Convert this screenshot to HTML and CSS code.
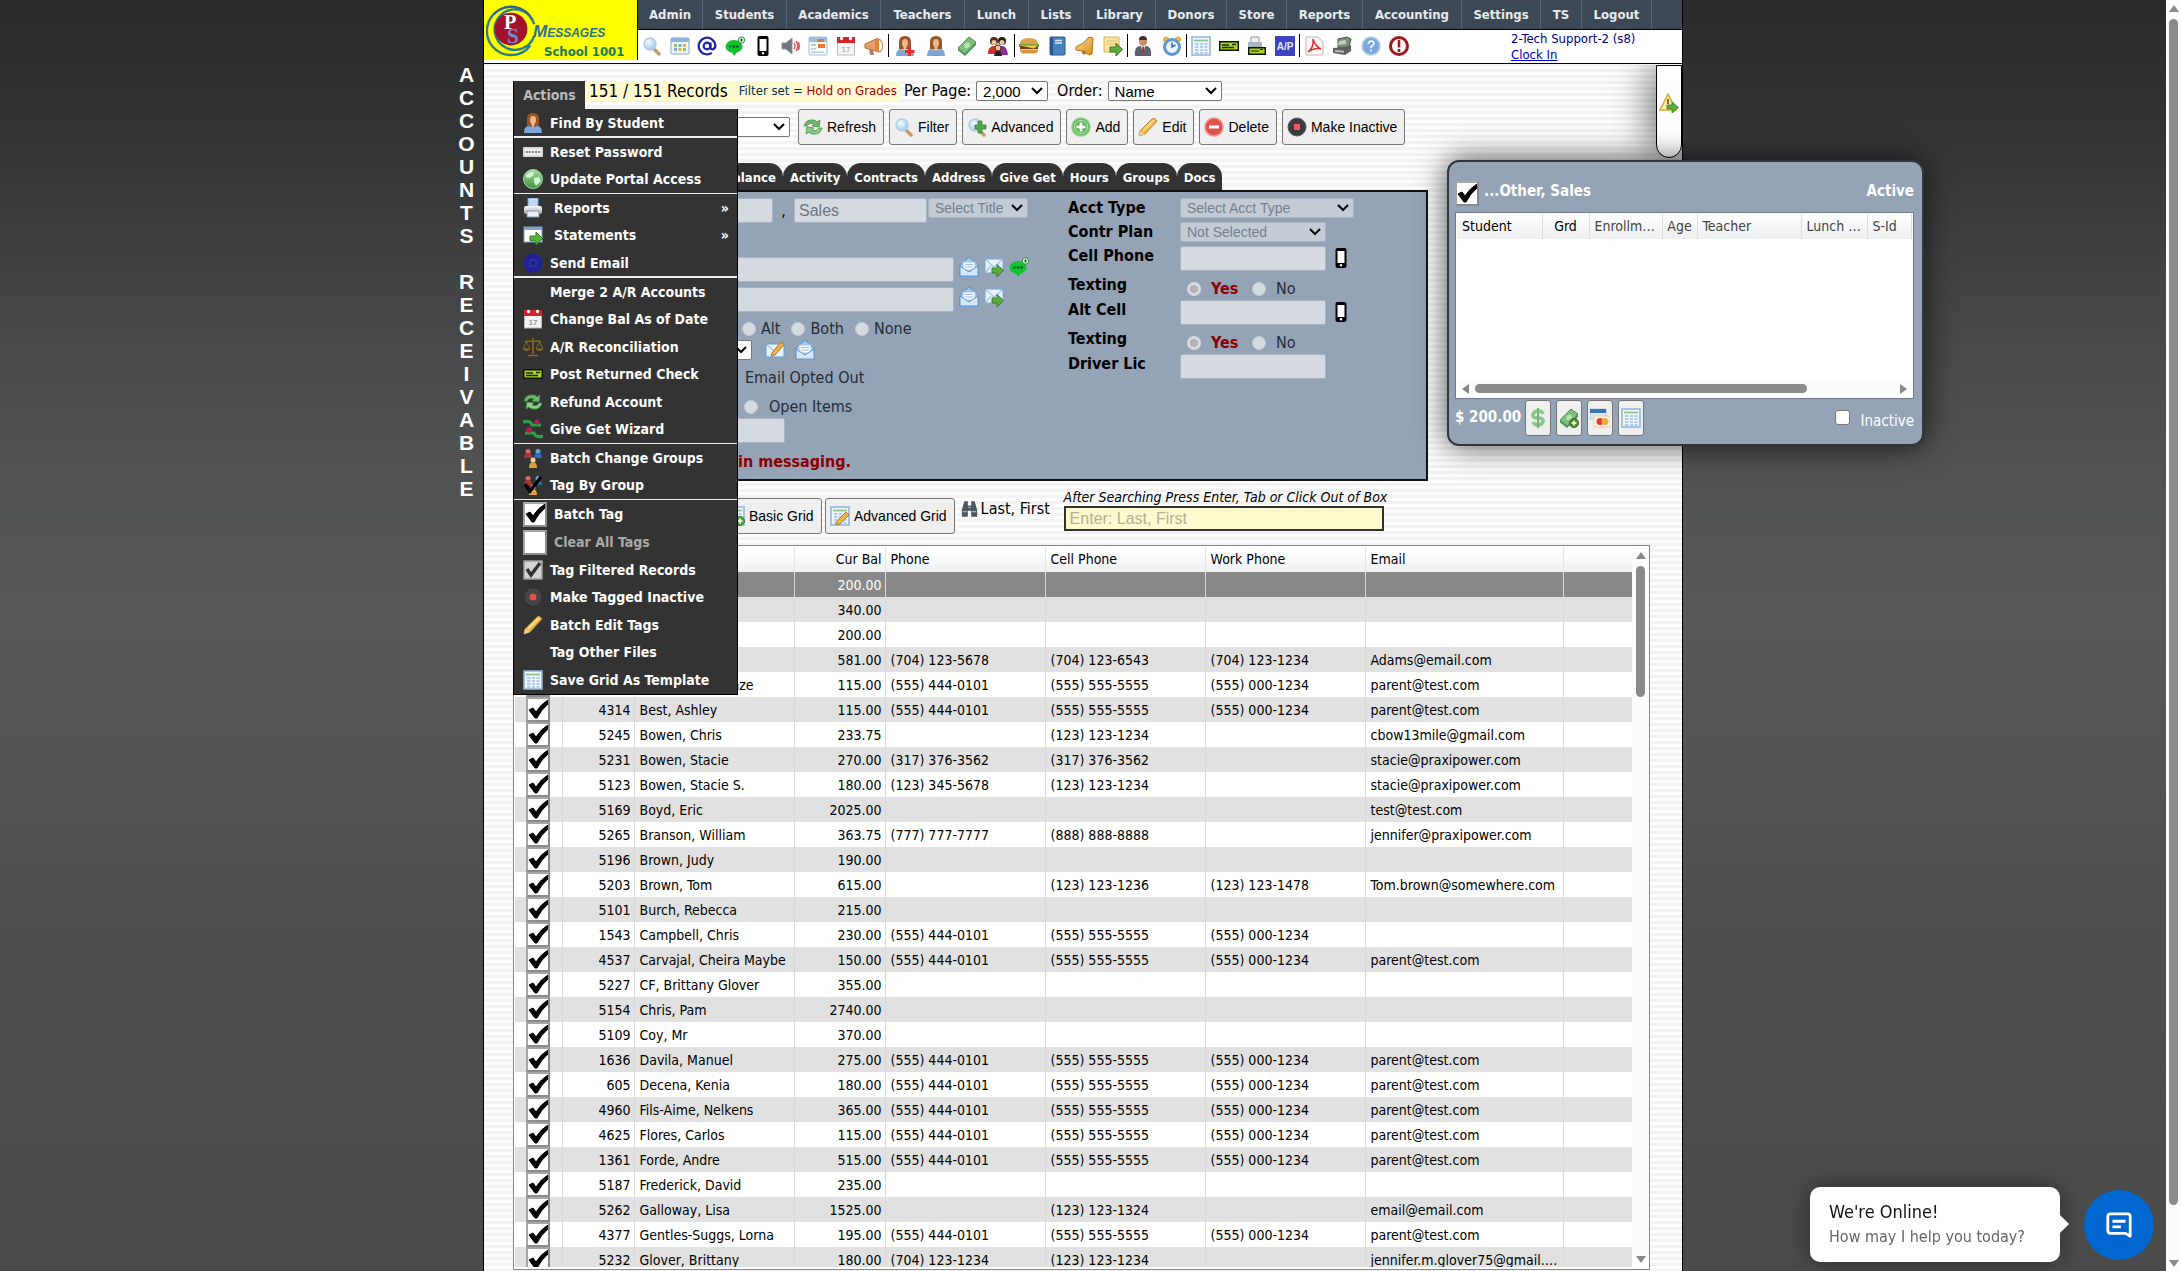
FILE: index.html
```html
<!DOCTYPE html>
<html lang="en">
<head>
<meta charset="utf-8">
<title>Accounts Receivable</title>
<link rel="stylesheet" href="styles.css">
</head>
<body>
<svg class="sprite" aria-hidden="true">
  <defs>
    <linearGradient id="g-blue" x1="0" y1="0" x2="0" y2="1"><stop offset="0" stop-color="#f2f8ff"/><stop offset="1" stop-color="#8db9e6"/></linearGradient>
    <linearGradient id="g-green" x1="0" y1="0" x2="0" y2="1"><stop offset="0" stop-color="#a5dca0"/><stop offset="1" stop-color="#3f9440"/></linearGradient>
    <linearGradient id="g-gold" x1="0" y1="0" x2="1" y2="1"><stop offset="0" stop-color="#ffe08a"/><stop offset="1" stop-color="#d18a1c"/></linearGradient>
    <linearGradient id="g-gray" x1="0" y1="0" x2="0" y2="1"><stop offset="0" stop-color="#fafafa"/><stop offset="1" stop-color="#a8a8a8"/></linearGradient>
    <radialGradient id="g-glass" cx=".4" cy=".35" r=".7"><stop offset="0" stop-color="#f4faff"/><stop offset="1" stop-color="#9cc4ea"/></radialGradient>
  </defs>
  <symbol id="search" viewBox="0 0 20 20"><path d="M11 12l6 6" stroke="#c99a6b" stroke-width="3.4" stroke-linecap="round"/><circle cx="8" cy="8" r="6" fill="url(#g-glass)" stroke="#b4cde6" stroke-width="1.4"/></symbol>
  <symbol id="search-plus" viewBox="0 0 20 20"><use href="#search"/><path d="M11 4h4v4h4v4h-4v4h-4v-4H8V8h3z" fill="#4da64d" stroke="#2f7a33" stroke-width=".7"/></symbol>
  <symbol id="cal-grid" viewBox="0 0 20 20"><rect x="1" y="2" width="18" height="16" rx="1" fill="#eef5fc" stroke="#7fa8d2"/><path d="M1 2h18v4H1z" fill="#8cb4de"/><path d="M4 8h3v3H4zM13 12h3v3h-3z" fill="#8cc06a"/><path d="M8.500 8h3v3h-3zM4 12h3v3H4z" fill="#7da9dc"/><path d="M13 8h3v3h-3zM8.500 12h3v3h-3z" fill="#e8b04c"/></symbol>
  <symbol id="at" viewBox="0 0 20 20"><circle cx="10" cy="10" r="3.300" fill="none" stroke="#1a1fb4" stroke-width="2.200"/><path d="M13.500 6.500v5.500c0 2 4.800 2 4.800-2.500a8.300 8.300 0 1 0-3.500 7.300" fill="none" stroke="#1a1fb4" stroke-width="2.200"/></symbol>
  <symbol id="at-disc" viewBox="0 0 20 20"><circle cx="10" cy="10" r="9.500" fill="#20209c"/><circle cx="10" cy="10" r="3.500" fill="none" stroke="#333a8a" stroke-width="1.500"/></symbol>
  <symbol id="chat" viewBox="0 0 20 20"><ellipse cx="9" cy="10.500" rx="8.500" ry="6.500" fill="#12c22c"/><path d="M7 16l2 4 3-4z" fill="#12c22c"/><circle cx="5.500" cy="10.500" r="1.300" fill="#073"/><circle cx="9" cy="10.500" r="1.300" fill="#053"/><circle cx="12.500" cy="10.500" r="1.300" fill="#053"/><circle cx="16.500" cy="4" r="3.200" fill="#e9fbe9" stroke="#1a6b24" stroke-width=".8"/><path d="M16.500 2.300v3.400M14.800 4h3.400" stroke="#1a6b24" stroke-width="1.100"/></symbol>
  <symbol id="phone" viewBox="0 0 20 20"><rect x="4.500" y="0" width="11" height="20" rx="2" fill="#000"/><rect x="6.500" y="3" width="7" height="12" fill="#fff"/><circle cx="10" cy="17.300" r="1.200" fill="#fff"/></symbol>
  <symbol id="speaker" viewBox="0 0 20 20"><path d="M1 7h4l6-5v16l-6-5H1z" fill="#6d7680" stroke="#8b939b"/><path d="M13 7q2 3 0 6M15 5q3.500 5 0 10M17.300 6q2 4 0 8" fill="none" stroke="#e05555" stroke-width="1.500"/></symbol>
  <symbol id="cal-orange" viewBox="0 0 20 20"><rect x="1" y="1" width="18" height="18" rx="1" fill="#f6f9fc" stroke="#a4bed8"/><path d="M1 1h18v5H1z" fill="#9dbfe4"/><path d="M9 3h7v3H9zM10 8h7v4h-7z" fill="#e9772e"/><path d="M3 8h5v2H3zM3 12h5v1.500H3zM3 15.500h13V17H3z" fill="#bcc9d8"/></symbol>
  <symbol id="cal-date" viewBox="0 0 20 20"><rect x="1.500" y="2" width="17" height="17" fill="#f4f4f4" stroke="#b9b9b9"/><path d="M1 1h18v6H1z" fill="#d1242b"/><circle cx="5.500" cy="2.500" r="1.700" fill="#fff"/><circle cx="14.500" cy="2.500" r="1.700" fill="#fff"/><text x="10" y="16" font-size="8" text-anchor="middle" fill="#999" font-family="Liberation Sans">17</text></symbol>
  <symbol id="horn" viewBox="0 0 20 20"><path d="M1 8l11-5v12L1 12z" fill="#e2a06c" stroke="#b3703c"/><path d="M12 2q7 0 7 8t-7 6z" fill="#e8803c"/><path d="M15 4q3 1 3 6t-3 5z" fill="#fff"/><path d="M5 13h4l1 6H6z" fill="#a88668"/></symbol>
  <symbol id="person" viewBox="0 0 20 20"><path d="M4 13V6q0-6 6-6t6 6v7z" fill="#9a5424"/><ellipse cx="10" cy="7" rx="3" ry="4" fill="#e9b88b"/><path d="M1 20q0-7 5-7l4 1 4-1q5 0 5 7z" fill="#7fa5d8"/><path d="M8 10h4l-2 6z" fill="#e9b88b"/></symbol>
  <symbol id="person-add" viewBox="0 0 20 20"><use href="#person"/><path d="M13 10.500h3V14h3.500v3H16v3h-3v-3h-3v-3h3z" fill="#e03131"/></symbol>
  <symbol id="money" viewBox="0 0 20 20"><path d="M1 12L12 1l7 5L8 18z" fill="#7cbf80" stroke="#4d9556"/><path d="M1 12v2.500L8 20l11-11V6L8 18z" fill="#4d9556"/><ellipse cx="10" cy="9.500" rx="3" ry="2.500" fill="#b7e0b5" transform="rotate(-40 10 9.500)"/></symbol>
  <symbol id="money-add" viewBox="0 0 20 20"><use href="#money"/><circle cx="15" cy="15" r="4.500" fill="#4f8c2c" stroke="#33651a"/><path d="M15 12.500v5M12.500 15h5" stroke="#fff" stroke-width="1.500"/></symbol>
  <symbol id="people" viewBox="0 0 20 20"><circle cx="6" cy="5" r="4" fill="#4a2a1a"/><circle cx="14" cy="5" r="4" fill="#1d1d1d"/><circle cx="6" cy="6.500" r="2.500" fill="#f0c49a"/><circle cx="14" cy="6.500" r="2.500" fill="#f0c49a"/><path d="M0 18q0-8 6-8t5 8z" fill="#c33"/><path d="M9 19q0-9 5-9t6 9z" fill="#8a2f96"/><circle cx="10" cy="12" r="3" fill="#f0c49a" stroke="#4a2a1a"/><path d="M6 20q1-5 4-5t4 5z" fill="#222"/></symbol>
  <symbol id="burger" viewBox="0 0 20 20"><path d="M1 8q0-6 9-6t9 6z" fill="#e0a04c"/><path d="M0 8h20v3H0z" fill="#6fa03c"/><path d="M1 10h18v3H1z" fill="#74401e"/><path d="M1 9.500h18l-4 3z" fill="#f2c843"/><path d="M1 13.500h18q0 4-4 4H5q-4 0-4-4z" fill="#d8953f"/></symbol>
  <symbol id="book" viewBox="0 0 20 20"><rect x="3" y="1" width="15" height="18" rx="1" fill="#4d83bd" stroke="#28588e"/><path d="M3 1h3v18H3z" fill="#28588e"/><path d="M8 4.500h7M8 7h7" stroke="#dce9f7" stroke-width="1.300"/></symbol>
  <symbol id="bell" viewBox="0 0 20 20"><path d="M1 11Q9 8 14 1l4 1-1 16-3 1Q8 14 1 14z" fill="url(#g-gold)" stroke="#b0741a"/><circle cx="9" cy="16.500" r="2" fill="#b0741a"/></symbol>
  <symbol id="note-out" viewBox="0 0 20 20"><path d="M1 1h15v12l-3 3H1z" fill="#fbe3a2" stroke="#dcae55"/><path d="M3.500 5h10M3.500 8h8" stroke="#e3b968"/><path d="M7 11h6V7l6.500 6.500L13 20v-4H7z" fill="#5cae3c" stroke="#34802a"/></symbol>
  <symbol id="suit" viewBox="0 0 20 20"><path d="M2 20q-1-10 5-10h6q6 0 5 10z" fill="#5b616c"/><circle cx="10" cy="5.500" r="4.200" fill="#c98f66"/><path d="M6 4q0-4 4-4t4 4z" fill="#3d3029"/><path d="M8 10h4l-2 8z" fill="#fff"/><path d="M9.300 10.500h1.600L11 16l-1 2-1-2z" fill="#b61f2b"/></symbol>
  <symbol id="clock" viewBox="0 0 20 20"><circle cx="4" cy="3.500" r="3" fill="#e7b63f"/><circle cx="16" cy="3.500" r="3" fill="#e7b63f"/><circle cx="10" cy="11" r="7.500" fill="#eaf4ff" stroke="#5c97d0" stroke-width="3"/><path d="M10 6.500V11l3.500-2" stroke="#356ea8" stroke-width="1.500" fill="none"/></symbol>
  <symbol id="sheet" viewBox="0 0 20 20"><rect x="1" y="1" width="18" height="18" fill="#eef6fd" stroke="#8fb4dc" stroke-width="1.500"/><path d="M3 4.500h14" stroke="#8ac08a" stroke-width="1.600"/><path d="M4 8h3.500M9 8h3M13.500 8h3M4 11h3.500M9 11h3M13.500 11h3M4 14h3.500M9 14h3M13.500 14h3M4 17h3.500M9 17h3M13.500 17h3" stroke="#b4cdea" stroke-width="1.800"/></symbol>
  <symbol id="sheet-edit" viewBox="0 0 20 20"><use href="#sheet"/><path d="M7 15L16 6l3 3-9 9-4 1z" fill="#f2b544" stroke="#b5802a"/></symbol>
  <symbol id="sheet-add" viewBox="0 0 20 20"><use href="#sheet"/><circle cx="15" cy="15" r="4.500" fill="#59a845" stroke="#2f7d25"/><path d="M15 12.500v5M12.500 15h5" stroke="#fff" stroke-width="1.600"/></symbol>
  <symbol id="check-slip" viewBox="0 0 20 20"><path d="M0 5h20v10H0z" fill="#111"/><path d="M1.500 6.500h17v7h-17z" fill="#a9d61c"/><path d="M3 9h7M3 11.500h12M13 8.500h4" stroke="#1c2a00" stroke-width="1.300"/></symbol>
  <symbol id="print-slip" viewBox="0 0 20 20"><path d="M4 1h8v7H4z" fill="#eef4fa" stroke="#8a98a8"/><path d="M1 6h14v6H1z" fill="#a9b4c2"/><path d="M1 11h18v8H1z" fill="#111"/><path d="M2.500 12.500h15v5h-15z" fill="#a9d61c"/><path d="M4 15h8M13 13.500h3" stroke="#1c2a00" stroke-width="1.200"/></symbol>
  <symbol id="ap" viewBox="0 0 20 20"><path d="M0 0h20v20H0z" fill="#3d45c4"/><text x="10" y="14" font-size="10" font-weight="bold" text-anchor="middle" fill="#e4e6ff" font-family="Liberation Sans">A/P</text></symbol>
  <symbol id="pdf" viewBox="0 0 20 20"><path d="M2 1h12l5 5v13H2z" fill="#fbf6f6" stroke="#c9b5b5"/><path d="M9 3q2 7 8 10-6-2-13 3 6-4 5-13" fill="none" stroke="#d8332e" stroke-width="1.500"/></symbol>
  <symbol id="register" viewBox="0 0 20 20"><path d="M6 3l9-2 4 2-2 8-11 1z" fill="#7d8a7d" stroke="#4d574d"/><path d="M7 5l7-1v4l-8 1z" fill="#b9d6b2"/><path d="M1 12l13-1 5-2v6l-6 4-12-2z" fill="#59635a"/><path d="M3 14l9 .8v2L3 16z" fill="#b7c2b6"/></symbol>
  <symbol id="help" viewBox="0 0 20 20"><circle cx="10" cy="10" r="9" fill="#7ba9df" stroke="#b9cfe8" stroke-width="1.500"/><path d="M7.500 8q0-3 2.700-3t2.600 2.600q0 1.500-2.700 3.200v1.500M10.100 13.800v1.700" fill="none" stroke="#fff" stroke-width="1.700"/></symbol>
  <symbol id="alert" viewBox="0 0 20 20"><circle cx="10" cy="10" r="8.500" fill="#fff" stroke="#a0151e" stroke-width="3"/><path d="M10 4v7.500M10 13v3" stroke="#a0151e" stroke-width="2.600"/></symbol>
  <symbol id="refresh" viewBox="0 0 20 20"><path d="M1 9q2-7 9-6 3 0 4 2l3-2-1 7-7-1 2-2q-5-2-7 2z" fill="#6cb76a" stroke="#3f9440" stroke-width=".8"/><path d="M19 11q-2 7-9 6-3 0-4-2l-3 2 1-7 7 1-2 2q5 2 7-2z" fill="#8ccb88" stroke="#3f9440" stroke-width=".8"/></symbol>
  <symbol id="add" viewBox="0 0 20 20"><circle cx="10" cy="10" r="9" fill="#62b95c" stroke="#8fce8a" stroke-width="1.500"/><circle cx="10" cy="10" r="6.500" fill="none" stroke="#c9ebc4"/><path d="M10 5.500v9M5.500 10h9" stroke="#fff" stroke-width="2.600"/></symbol>
  <symbol id="minus" viewBox="0 0 20 20"><circle cx="10" cy="10" r="9" fill="#e0524d" stroke="#ef9690" stroke-width="1.500"/><path d="M5 10h10" stroke="#fff" stroke-width="3"/></symbol>
  <symbol id="stop" viewBox="0 0 20 20"><circle cx="10" cy="10" r="9" fill="#3c3c40" stroke="#5a5a5e"/><rect x="7" y="7" width="6" height="6" fill="#f05a5a"/></symbol>
  <symbol id="record" viewBox="0 0 20 20"><circle cx="10" cy="10" r="8.500" fill="#454549"/><circle cx="10" cy="10" r="3.500" fill="#e05050"/></symbol>
  <symbol id="pencil" viewBox="0 0 20 20"><path d="M2 14L14 2q3-2 5 2L7 17l-6 2z" fill="#f0b848" stroke="#b88432"/><path d="M1 19l1-5 5 3z" fill="#e9cfa8"/><path d="M5 14L16 3" stroke="#ffe3a0" stroke-width="1.500"/></symbol>
  <symbol id="keyboard" viewBox="0 0 20 20"><rect y="5" width="20" height="10" rx="1" fill="#d9d9d9"/><path d="M2 8h16M2 12h16" stroke="#f7f7f7" stroke-width="1.500"/><path d="M3 10h14" stroke="#777" stroke-width="1.500" stroke-dasharray="2 1"/></symbol>
  <symbol id="globe" viewBox="0 0 20 20"><circle cx="10" cy="10" r="9.500" fill="url(#g-green)"/><path d="M3 6q4-4 8-3l-1 4-4 2-3-1zM11 9l5-1 2 4-5 5-2-4z" fill="#d6f2d0"/><circle cx="10" cy="10" r="9.500" fill="none" stroke="#9bd6a4"/></symbol>
  <symbol id="printer" viewBox="0 0 20 20"><path d="M5 0h10v9H5z" fill="#bfd9f4" stroke="#7ea3cc"/><rect x="1" y="8" width="18" height="8" rx="2" fill="url(#g-gray)"/><path d="M4 13h12v6H4z" fill="#e9eff6" stroke="#8896a6"/></symbol>
  <symbol id="win-out" viewBox="0 0 20 20"><rect x="1" y="2" width="18" height="15" fill="#fff" stroke="#7ba4d4"/><path d="M1 2h18v3H1z" fill="#7ba4d4"/><path d="M7 11h6V7l6.500 6.500L13 20v-4H7z" fill="#5cae3c" stroke="#34802a"/></symbol>
  <symbol id="scales" viewBox="0 0 20 20"><path d="M10 1v16M5 18.500h10M2 5q4-2 8 0 4-2 8 0" fill="none" stroke="#8a6a1c" stroke-width="1.600"/><path d="M0 12L3.500 5 7 12zM13 12l3.500-7L20 12z" fill="none" stroke="#8a6a1c"/><path d="M0 12h7q-3.500 4-7 0zM13 12h7q-3.500 4-7 0z" fill="#8a6a1c"/></symbol>
  <symbol id="give" viewBox="0 0 20 20"><path d="M0 3q8-2 9 3h9M20 17q-8 2-9-3H2" fill="none" stroke="#2aa049" stroke-width="3.200"/><circle cx="14" cy="3" r="2.500" fill="#b02050"/><circle cx="6" cy="11" r="2.800" fill="#b02050"/></symbol>
  <symbol id="groups" viewBox="0 0 20 20"><circle cx="5" cy="3.500" r="2.500" fill="#d46a6a"/><path d="M1 10q0-5 4-5t4 5z" fill="#a83838"/><circle cx="15" cy="3.500" r="2.500" fill="#6fa4dc"/><path d="M11 10q0-5 4-5t4 5z" fill="#2e6cb4"/><circle cx="10" cy="12" r="2.500" fill="#f0cf98"/><path d="M6 20q0-6 4-6t4 6z" fill="#d9a23c"/></symbol>
  <symbol id="groups-tick" viewBox="0 0 20 20"><use href="#groups"/><path d="M2 9l5 7L18 2" fill="none" stroke="#000" stroke-width="3.500"/></symbol>
  <symbol id="tick-gray" viewBox="0 0 20 20"><rect x="1" y="1" width="18" height="18" fill="#d4d4d4" stroke="#9c9c9c" stroke-width="1.500"/><path d="M4 9l4 6 9-12" fill="none" stroke="#333" stroke-width="3.400"/></symbol>
  <symbol id="mail-open" viewBox="0 0 20 20"><path d="M1 8l9-8 9 8v12H1z" fill="#9fc4ec" stroke="#5d92cc"/><path d="M4 5h12v8H4z" fill="#f4f9ff" stroke="#a9c8ea"/><path d="M6 7.500h8M6 10h8" stroke="#9dbfe4"/><path d="M1 19V9l9 6 9-6v10z" fill="#d5e7f9" stroke="#5d92cc"/></symbol>
  <symbol id="mail-out" viewBox="0 0 20 20"><path d="M1 2h18v14H1z" fill="#e6f1fc" stroke="#7ba8dc"/><path d="M1 2l9 8 9-8M1 16l6-7" fill="none" stroke="#7ba8dc"/><path d="M8 11h5V7.500l6.500 6L13 20v-4H8z" fill="#5cae3c" stroke="#34802a"/></symbol>
  <symbol id="mail-edit" viewBox="0 0 20 20"><path d="M1 4h18v13H1z" fill="#e6f1fc" stroke="#6b9bd2"/><path d="M1 4l9 8 9-8" fill="none" stroke="#7ba8dc"/><path d="M7 13L16 2l3 2.500L10 15l-4 1z" fill="#f2b544" stroke="#a8742a"/></symbol>
  <symbol id="binoc" viewBox="0 0 20 20"><path d="M4 1h4v5h4V1h4l3 10v8h-7v-7H8v7H1v-8z" fill="#4b5561"/><path d="M2 13h5M13 13h5M8.500 8h3" stroke="#a7b4c2" stroke-width="1.500"/></symbol>
  <symbol id="warn-out" viewBox="0 0 20 20"><path d="M9 1L1 17h16z" fill="#fdf0b0" stroke="#dca830" stroke-width="1.500"/><path d="M9 6v5" stroke="#8a6a1c" stroke-width="2"/><path d="M8 12h5V9l6.500 5.500L13 20v-4H8z" fill="#5cae3c" stroke="#34802a" stroke-width=".8"/></symbol>
  <symbol id="dollar" viewBox="0 0 20 20"><path d="M15 6q-1-3-5-3T5 6.500 10 10t5 3.500T10 17t-5-3" fill="none" stroke="#86c98a" stroke-width="3.500"/><path d="M10 0v20" stroke="#6db573" stroke-width="2"/></symbol>
  <symbol id="cards" viewBox="0 0 20 20"><path d="M0 1h16v10H0z" fill="#dfe9f6" stroke="#9bb4d4" stroke-width=".6"/><path d="M0 1h16v4H0z" fill="#3e72bc"/><path d="M4 8h16v11H4z" fill="#fdf4e4" stroke="#d8b98a" stroke-width=".6"/><circle cx="10" cy="13.500" r="3.500" fill="#e23b2e"/><circle cx="15" cy="13.500" r="3.500" fill="#f4a83a"/></symbol>
</svg>

<div class="side-title"><span>ACCOUNTS</span> <span>RECEIVABLE</span></div>

<div class="page">
  <header class="top">
    <a class="logo" href="#">
      <svg class="logo-mark" viewBox="0 0 54 56" aria-hidden="true">
        <path d="M50 22A25 25 0 1 0 46 44M46 14A21 21 0 1 0 50 34" fill="none" stroke="#2a7f86" stroke-width="2.500"/>
        <path d="M48 18A24 24 0 0 0 8 12" fill="none" stroke="#38618f" stroke-width="2"/>
        <circle cx="26" cy="27" r="17" fill="#a3122c"/>
        <text x="25" y="27" font-family="Liberation Serif" font-size="21" font-weight="bold" text-anchor="middle" fill="#fff">P</text>
        <text x="28" y="41" font-family="Liberation Serif" font-size="22" font-weight="bold" text-anchor="middle" fill="#6f8ed0">S</text>
      </svg>
      <span class="logo-text"><span class="logo-name">Messages</span><span class="logo-school">School 1001</span></span>
    </a>
    <div class="top-main">
      <nav class="menu">
        <a href="#">Admin</a><a href="#">Students</a><a href="#">Academics</a><a href="#">Teachers</a><a href="#">Lunch</a><a href="#">Lists</a><a href="#">Library</a><a href="#">Donors</a><a href="#">Store</a><a href="#">Reports</a><a href="#">Accounting</a><a href="#">Settings</a><a href="#">TS</a><a href="#">Logout</a>
      </nav>
      <div class="shortcuts">
        <div class="set set-nine"><svg><use href="#search"/></svg><svg><use href="#cal-grid"/></svg><svg><use href="#at"/></svg><svg><use href="#chat"/></svg><svg><use href="#phone"/></svg><svg><use href="#speaker"/></svg><svg><use href="#cal-orange"/></svg><svg><use href="#cal-date"/></svg><svg><use href="#horn"/></svg></div>
        <div class="set set-wide"><svg><use href="#person-add"/></svg><svg><use href="#person"/></svg><svg><use href="#money"/></svg><svg><use href="#people"/></svg></div>
        <div class="set set-four"><svg><use href="#burger"/></svg><svg><use href="#book"/></svg><svg><use href="#bell"/></svg><svg><use href="#note-out"/></svg></div>
        <div class="set set-two"><svg><use href="#suit"/></svg><svg><use href="#clock"/></svg></div>
        <div class="set set-four"><svg><use href="#sheet"/></svg><svg><use href="#check-slip"/></svg><svg><use href="#print-slip"/></svg><svg><use href="#ap"/></svg></div>
        <div class="set set-four"><svg><use href="#pdf"/></svg><svg><use href="#register"/></svg><svg><use href="#help"/></svg><svg><use href="#alert"/></svg></div>
        <div class="user"><span>2-Tech Support-2 (s8)</span><a href="#">Clock In</a></div>
      </div>
    </div>
  </header>

  <main class="content">
    <div class="status">
      <button class="actions-tab" type="button">Actions</button>
      <p class="summary"><span class="count">151 / 151 Records</span><span class="filter">Filter set = <em>Hold on Grades</em></span></p>
      <label for="per-page">Per Page:</label>
      <select id="per-page" class="per-page"><option>2,000</option></select>
      <label for="order">Order:</label>
      <select id="order" class="order"><option>Name</option></select>
    </div>

    <div class="tools">
      <select class="view" aria-label="View"><option></option></select>
      <button type="button"><svg><use href="#refresh"/></svg>Refresh</button>
      <button type="button"><svg><use href="#search"/></svg>Filter</button>
      <button type="button"><svg><use href="#search-plus"/></svg>Advanced</button>
      <button type="button"><svg><use href="#add"/></svg>Add</button>
      <button type="button"><svg><use href="#pencil"/></svg>Edit</button>
      <button type="button"><svg><use href="#minus"/></svg>Delete</button>
      <button type="button"><svg><use href="#stop"/></svg>Make Inactive</button>
    </div>

    <nav class="tabs">
      <a href="#">Balance</a><a href="#">Activity</a><a href="#">Contracts</a><a href="#">Address</a><a href="#">Give Get</a><a href="#">Hours</a><a href="#">Groups</a><a href="#">Docs</a>
    </nav>

    <section class="panel">
      <div class="who">
        <div class="line name-line"><input class="last" type="text" aria-label="Last name" disabled><span class="comma">,</span><input class="first" type="text" value="Sales" aria-label="First name" disabled><select class="title" aria-label="Title" disabled><option>Select Title</option></select></div>
        <div class="line mail-line"><input class="mail" type="text" aria-label="Email" disabled><svg><use href="#mail-open"/></svg><svg><use href="#mail-out"/></svg><svg><use href="#chat"/></svg></div>
        <div class="line mail-line"><input class="mail" type="text" aria-label="Alternate email" disabled><svg><use href="#mail-open"/></svg><svg><use href="#mail-out"/></svg></div>
        <div class="line radio-line"><label><input type="radio" name="use" disabled>Alt</label><label><input type="radio" name="use" disabled>Both</label><label><input type="radio" name="use" disabled>None</label></div>
        <div class="line send-line"><select class="template" aria-label="Template"><option></option></select><svg><use href="#mail-edit"/></svg><svg><use href="#mail-open"/></svg></div>
        <div class="line opted">Email Opted Out</div>
        <div class="line open-line"><label><input type="radio" name="items" disabled>Open Items</label></div>
        <div class="line"><input class="code" type="text" aria-label="Code" disabled></div>
        <p class="notice">in messaging.</p>
      </div>
      <div class="details">
        <div class="row"><label for="acct-type">Acct Type</label><select id="acct-type" class="wide" disabled><option>Select Acct Type</option></select></div>
        <div class="row"><label for="plan">Contr Plan</label><select id="plan" disabled><option>Not Selected</option></select></div>
        <div class="row"><label for="cell">Cell Phone</label><input id="cell" type="text" disabled><svg><use href="#phone"/></svg></div>
        <div class="row texting"><span class="name">Texting</span><label class="yes"><input type="radio" name="t1" checked disabled>Yes</label><label class="no"><input type="radio" name="t1" disabled>No</label></div>
        <div class="row"><label for="alt-cell">Alt Cell</label><input id="alt-cell" type="text" disabled><svg><use href="#phone"/></svg></div>
        <div class="row texting"><span class="name">Texting</span><label class="yes"><input type="radio" name="t2" checked disabled>Yes</label><label class="no"><input type="radio" name="t2" disabled>No</label></div>
        <div class="row"><label for="lic">Driver Lic</label><input id="lic" type="text" disabled></div>
      </div>
    </section>

    <div class="finder">
      <button class="basic" type="button"><svg><use href="#sheet-add"/></svg>Basic Grid</button>
      <button type="button"><svg><use href="#sheet-edit"/></svg>Advanced Grid</button>
      <span class="find-name"><svg><use href="#binoc"/></svg>Last, First</span>
      <div class="find-box"><label for="find">After Searching Press Enter, Tab or Click Out of Box</label><input id="find" type="text" placeholder="Enter: Last, First"></div>
    </div>

    <div class="grid">
      <div class="grid-view">
        <table>
          <colgroup><col class="c-tag"><col class="c-id"><col class="c-name"><col class="c-bal"><col class="c-tel"><col class="c-tel"><col class="c-tel"><col class="c-mail"><col></colgroup>
          <thead><tr><th></th><th></th><th></th><th class="num">Cur Bal</th><th>Phone</th><th>Cell Phone</th><th>Work Phone</th><th>Email</th><th></th></tr></thead>
          <tbody>
            <tr class="picked"><td><input type="checkbox" checked aria-label="Tag"></td><td></td><td></td><td>200.00</td><td></td><td></td><td></td><td></td><td></td></tr>
            <tr><td><input type="checkbox" checked aria-label="Tag"></td><td></td><td></td><td>340.00</td><td></td><td></td><td></td><td></td><td></td></tr>
            <tr><td><input type="checkbox" checked aria-label="Tag"></td><td></td><td></td><td>200.00</td><td></td><td></td><td></td><td></td><td></td></tr>
            <tr><td><input type="checkbox" checked aria-label="Tag"></td><td></td><td></td><td>581.00</td><td>(704) 123-5678</td><td>(704) 123-6543</td><td>(704) 123-1234</td><td>Adams@email.com</td><td></td></tr>
            <tr><td><input type="checkbox" checked aria-label="Tag"></td><td></td><td>Barnes, Mackenze</td><td>115.00</td><td>(555) 444-0101</td><td>(555) 555-5555</td><td>(555) 000-1234</td><td>parent@test.com</td><td></td></tr>
            <tr><td><input type="checkbox" checked aria-label="Tag"></td><td>4314</td><td>Best, Ashley</td><td>115.00</td><td>(555) 444-0101</td><td>(555) 555-5555</td><td>(555) 000-1234</td><td>parent@test.com</td><td></td></tr>
            <tr><td><input type="checkbox" checked aria-label="Tag"></td><td>5245</td><td>Bowen, Chris</td><td>233.75</td><td></td><td>(123) 123-1234</td><td></td><td>cbow13mile@gmail.com</td><td></td></tr>
            <tr><td><input type="checkbox" checked aria-label="Tag"></td><td>5231</td><td>Bowen, Stacie</td><td>270.00</td><td>(317) 376-3562</td><td>(317) 376-3562</td><td></td><td>stacie@praxipower.com</td><td></td></tr>
            <tr><td><input type="checkbox" checked aria-label="Tag"></td><td>5123</td><td>Bowen, Stacie S.</td><td>180.00</td><td>(123) 345-5678</td><td>(123) 123-1234</td><td></td><td>stacie@praxipower.com</td><td></td></tr>
            <tr><td><input type="checkbox" checked aria-label="Tag"></td><td>5169</td><td>Boyd, Eric</td><td>2025.00</td><td></td><td></td><td></td><td>test@test.com</td><td></td></tr>
            <tr><td><input type="checkbox" checked aria-label="Tag"></td><td>5265</td><td>Branson, William</td><td>363.75</td><td>(777) 777-7777</td><td>(888) 888-8888</td><td></td><td>jennifer@praxipower.com</td><td></td></tr>
            <tr><td><input type="checkbox" checked aria-label="Tag"></td><td>5196</td><td>Brown, Judy</td><td>190.00</td><td></td><td></td><td></td><td></td><td></td></tr>
            <tr><td><input type="checkbox" checked aria-label="Tag"></td><td>5203</td><td>Brown, Tom</td><td>615.00</td><td></td><td>(123) 123-1236</td><td>(123) 123-1478</td><td>Tom.brown@somewhere.com</td><td></td></tr>
            <tr><td><input type="checkbox" checked aria-label="Tag"></td><td>5101</td><td>Burch, Rebecca</td><td>215.00</td><td></td><td></td><td></td><td></td><td></td></tr>
            <tr><td><input type="checkbox" checked aria-label="Tag"></td><td>1543</td><td>Campbell, Chris</td><td>230.00</td><td>(555) 444-0101</td><td>(555) 555-5555</td><td>(555) 000-1234</td><td></td><td></td></tr>
            <tr><td><input type="checkbox" checked aria-label="Tag"></td><td>4537</td><td>Carvajal, Cheira Maybe</td><td>150.00</td><td>(555) 444-0101</td><td>(555) 555-5555</td><td>(555) 000-1234</td><td>parent@test.com</td><td></td></tr>
            <tr><td><input type="checkbox" checked aria-label="Tag"></td><td>5227</td><td>CF, Brittany Glover</td><td>355.00</td><td></td><td></td><td></td><td></td><td></td></tr>
            <tr><td><input type="checkbox" checked aria-label="Tag"></td><td>5154</td><td>Chris, Pam</td><td>2740.00</td><td></td><td></td><td></td><td></td><td></td></tr>
            <tr><td><input type="checkbox" checked aria-label="Tag"></td><td>5109</td><td>Coy, Mr</td><td>370.00</td><td></td><td></td><td></td><td></td><td></td></tr>
            <tr><td><input type="checkbox" checked aria-label="Tag"></td><td>1636</td><td>Davila, Manuel</td><td>275.00</td><td>(555) 444-0101</td><td>(555) 555-5555</td><td>(555) 000-1234</td><td>parent@test.com</td><td></td></tr>
            <tr><td><input type="checkbox" checked aria-label="Tag"></td><td>605</td><td>Decena, Kenia</td><td>180.00</td><td>(555) 444-0101</td><td>(555) 555-5555</td><td>(555) 000-1234</td><td>parent@test.com</td><td></td></tr>
            <tr><td><input type="checkbox" checked aria-label="Tag"></td><td>4960</td><td>Fils-Aime, Nelkens</td><td>365.00</td><td>(555) 444-0101</td><td>(555) 555-5555</td><td>(555) 000-1234</td><td>parent@test.com</td><td></td></tr>
            <tr><td><input type="checkbox" checked aria-label="Tag"></td><td>4625</td><td>Flores, Carlos</td><td>115.00</td><td>(555) 444-0101</td><td>(555) 555-5555</td><td>(555) 000-1234</td><td>parent@test.com</td><td></td></tr>
            <tr><td><input type="checkbox" checked aria-label="Tag"></td><td>1361</td><td>Forde, Andre</td><td>515.00</td><td>(555) 444-0101</td><td>(555) 555-5555</td><td>(555) 000-1234</td><td>parent@test.com</td><td></td></tr>
            <tr><td><input type="checkbox" checked aria-label="Tag"></td><td>5187</td><td>Frederick, David</td><td>235.00</td><td></td><td></td><td></td><td></td><td></td></tr>
            <tr><td><input type="checkbox" checked aria-label="Tag"></td><td>5262</td><td>Galloway, Lisa</td><td>1525.00</td><td></td><td>(123) 123-1324</td><td></td><td>email@email.com</td><td></td></tr>
            <tr><td><input type="checkbox" checked aria-label="Tag"></td><td>4377</td><td>Gentles-Suggs, Lorna</td><td>195.00</td><td>(555) 444-0101</td><td>(555) 555-5555</td><td>(555) 000-1234</td><td>parent@test.com</td><td></td></tr>
            <tr><td><input type="checkbox" checked aria-label="Tag"></td><td>5232</td><td>Glover, Brittany</td><td>180.00</td><td>(704) 123-1234</td><td>(123) 123-1234</td><td></td><td>jennifer.m.glover75@gmail.c...</td><td></td></tr>
          </tbody>
        </table>
      </div>
      <div class="bar grid-bar"><i class="up"></i><b></b><i class="down"></i></div>
    </div>

    <div class="dropdown">
      <div class="group"><a href="#"><svg><use href="#person"/></svg>Find By Student</a></div>
      <div class="group"><a href="#"><svg><use href="#keyboard"/></svg>Reset Password</a><a href="#"><svg><use href="#globe"/></svg>Update Portal Access</a></div>
      <div class="group"><a class="sub" href="#"><svg><use href="#printer"/></svg>Reports<span>»</span></a><a class="sub" href="#"><svg><use href="#win-out"/></svg>Statements<span>»</span></a><a href="#"><svg><use href="#at-disc"/></svg>Send Email</a></div>
      <div class="group"><a href="#"><svg></svg>Merge 2 A/R Accounts</a><a href="#"><svg><use href="#cal-date"/></svg>Change Bal As of Date</a><a href="#"><svg><use href="#scales"/></svg>A/R Reconciliation</a><a href="#"><svg><use href="#check-slip"/></svg>Post Returned Check</a><a href="#"><svg><use href="#refresh"/></svg>Refund Account</a><a href="#"><svg><use href="#give"/></svg>Give Get Wizard</a></div>
      <div class="group"><a href="#"><svg><use href="#groups"/></svg>Batch Change Groups</a><a href="#"><svg><use href="#groups-tick"/></svg>Tag By Group</a></div>
      <div class="group"><label><input type="checkbox" checked>Batch Tag</label><label class="off"><input type="checkbox">Clear All Tags</label><a href="#"><svg><use href="#tick-gray"/></svg>Tag Filtered Records</a><a href="#"><svg><use href="#record"/></svg>Make Tagged Inactive</a><a href="#"><svg><use href="#pencil"/></svg>Batch Edit Tags</a><a href="#"><svg></svg>Tag Other Files</a><a href="#"><svg><use href="#sheet"/></svg>Save Grid As Template</a></div>
    </div>
  </main>

  <button class="alert-tab" type="button" aria-label="Alerts"><svg><use href="#warn-out"/></svg></button>

  <aside class="card">
    <div class="card-head"><input id="card-tag" type="checkbox" checked><label for="card-tag">...Other, Sales</label><strong>Active</strong></div>
    <div class="card-grid">
      <table>
        <colgroup><col class="k-student"><col class="k-grd"><col class="k-enr"><col class="k-age"><col class="k-tch"><col class="k-lunch"><col></colgroup>
        <thead><tr><th class="dark">Student</th><th class="dark mid">Grd</th><th>Enrollment</th><th class="mid">Age</th><th>Teacher</th><th>Lunch Plan</th><th>S-Id</th></tr></thead>
      </table>
      <div class="bar card-bar"><i class="left"></i><b></b><i class="right"></i></div>
    </div>
    <div class="card-foot">
      <strong>$ 200.00</strong>
      <button type="button" aria-label="Charge"><svg><use href="#dollar"/></svg></button>
      <button type="button" aria-label="Add payment"><svg><use href="#money-add"/></svg></button>
      <button type="button" aria-label="Cards"><svg><use href="#cards"/></svg></button>
      <button type="button" aria-label="Ledger"><svg><use href="#sheet"/></svg></button>
      <label><input type="checkbox">Inactive</label>
    </div>
  </aside>
</div>

<div class="help-chat">
  <div class="bubble"><p>We're Online!</p><p class="soft">How may I help you today?</p></div>
  <button type="button" aria-label="Open chat"><svg viewBox="0 0 30 30" aria-hidden="true"><path d="M6 3h18q3 0 3 3v21l-5-3H6q-3 0-3-3V6q0-3 3-3z" fill="none" stroke="#fff" stroke-width="3" stroke-linejoin="round"/><path d="M8 11h14M8 17h9" stroke="#fff" stroke-width="3"/></svg></button>
</div>
<div class="bar window-bar"><i class="up"></i><b></b><i class="down"></i></div>
</body>
</html>
```
FILE: styles.css
```css
* { box-sizing: border-box; }

body {
  margin: 0;
  padding-right: 15px;
  height: 100vh;
  overflow: hidden;
  display: flex;
  justify-content: center;
  font: 14px/20px "DejaVu Sans Condensed", "Noto Sans", sans-serif;
  color: #000;
  background: linear-gradient(#2a2a2a, #323334 10%, #414243 21%, #505151 36%, #575757 48%, #555 56%, #4d4d4d 74%, #4a4a4a);
}

p { margin: 0; }
a { color: inherit; text-decoration: none; }
svg { width: 20px; height: 20px; flex: none; }
.sprite { position: absolute; width: 0; height: 0; }

button, input, select { font: 14px "Liberation Sans", sans-serif; margin: 0; }

select {
  appearance: none;
  height: 20px;
  padding: 0 6px;
  border: 1px solid #767676;
  border-radius: 2px;
  color: #000;
  background: #fff url("data:image/svg+xml,%3Csvg xmlns='http://www.w3.org/2000/svg' viewBox='0 0 12 8'%3E%3Cpath d='M1 1l5 5 5-5' fill='none' stroke='black' stroke-width='2'/%3E%3C/svg%3E") no-repeat right 4px center / 12px 8px;
}

/* Tick boxes with the bevelled frame */
input[type="checkbox"] {
  appearance: none;
  display: block;
  flex: none;
  width: 24px;
  height: 25px;
  border: 2px solid #a6a6a6;
  border-right-color: #8a8a8a;
  border-bottom-color: #8a8a8a;
  background: #fff;
}
input[type="checkbox"]:checked {
  background: #fff url("data:image/svg+xml,%3Csvg xmlns='http://www.w3.org/2000/svg' viewBox='0 0 20 20'%3E%3Cpath d='M1 10l4-2 3 4Q13 4 20 0v4Q13 10 9 18H7z' fill='black' stroke='black' stroke-width='1'/%3E%3C/svg%3E") no-repeat center / 20px 20px;
}

/* Vertical page title */
.side-title {
  width: 34px;
  padding-top: 63px;
  display: flex;
  gap: 23px;
  writing-mode: vertical-rl;
  text-orientation: upright;
  align-items: center;
  font: bold 21px "Liberation Sans", sans-serif;
  color: #fff;
}

.page {
  position: relative;
  width: 1200px;
  margin-right: 34px;
  display: flex;
  flex-direction: column;
  border: solid #000;
  border-width: 0 1px;
  background: repeating-linear-gradient(#fdfdfd 0 3px, #f2f2f2 3px 6px);
}

/* Header */
.top { display: flex; height: 64px; background: #fff; border-bottom: 1px solid #000; flex: none; }
.logo { display: flex; width: 154px; height: 60px; background: #ff0; border-right: 1px solid #000; padding: 2px 0 0 2px; }
.logo-mark { width: 52px; height: 56px; }
.logo-text { display: flex; flex-direction: column; padding-top: 19px; white-space: nowrap; }
.logo-name { font: italic bold small-caps 17px/22px "Liberation Sans", sans-serif; color: #2a6f95; margin-left: -5px; }
.logo-school { font-weight: bold; font-size: 13px; line-height: 18px; color: #157a5c; padding-left: 6px; }
.top-main { flex: 1; min-width: 0; }
.menu {
  display: grid;
  grid-template-columns: 65px 84px 94px 84px 64px 55px 72px 71px 60px 76px 99px 79px 41px 70px;
  height: 30px;
  background: #3c4856;
  border-bottom: 1px solid #000;
}
.menu a { border-right: 1px solid #566270; color: #e8ecf0; font-weight: bold; font-size: 13px; line-height: 29px; text-align: center; }
.shortcuts { display: flex; height: 31px; align-items: center; }
.set { display: flex; justify-content: space-around; align-items: center; height: 23px; border-right: 1px solid #000; }
.set-nine { width: 251px; }
.set-wide { width: 126px; }
.set-four { width: 113px; }
.set-two { width: 59px; }
.set:nth-child(6) { border-right: 0; }
.user { display: flex; flex-direction: column; margin: 3px 0 0 98px; font-size: 13px; line-height: 16px; color: #00008b; }
.user a { color: #00c; text-decoration: underline; }

/* Record status and toolbar */
.content { position: relative; flex: 1; min-height: 0; display: flex; flex-direction: column; padding: 17px 32px 1px 29px; }
.status { display: flex; height: 28px; font-size: 16px; }
.actions-tab { width: 72px; border: 0; border-left: 1px solid #000; background: #333; color: #bbb; font: bold 14px "DejaVu Sans Condensed", "Noto Sans", sans-serif; padding: 0; }
.summary { display: flex; align-items: center; gap: 11px; height: 20px; width: 315px; padding-left: 4px; background: #fffacd; white-space: nowrap; }
.count { font-size: 17px; }
.filter { font-size: 13px; color: #003355; }
.filter em { font-style: normal; color: #b00000; }
.status label { margin: 0 5px 0 4px; }
.status select + label { margin-left: 9px; }
.status select { font-size: 15px; }
.per-page { width: 72px; }
.order { width: 114px; }

.tools { display: flex; align-items: center; height: 36px; padding-left: 87px; gap: 5px; }
.view { width: 190px; margin-right: 3px; }
.tools button, .finder button, .card button {
  display: flex;
  align-items: center;
  gap: 4px;
  height: 36px;
  padding: 0 7px 0 4px;
  border: 1px solid #767676;
  border-radius: 3px;
  background: #efefef;
  color: #000;
}

/* Tabs and account panel */
.tabs { display: flex; margin-top: 18px; padding-left: 204px; }
.tabs a { height: 27px; padding: 0 7px; background: #333; color: #fff; font-weight: bold; font-size: 13px; line-height: 29px; border-radius: 14px 14px 0 0; }
.panel {
  display: grid;
  grid-template-columns: 553px 1fr;
  width: 915px;
  height: 291px;
  flex: none;
  padding-top: 6px;
  border: 2px solid #111;
  background: #95a3b7;
}
.panel input[type="text"] { height: 25px; border: 1px solid #a9b3c1; border-radius: 2px; background: #d5dae1; color: #6b7580; padding: 0 4px; font-size: 16px; }
.panel select:disabled { background-color: #c3cbd5; border-color: #a9b3c1; color: #74808f; opacity: 1; }
.panel input[type="radio"] { appearance: none; width: 14px; height: 14px; border-radius: 7px; background: #d5dae1; border: 1px solid #c3cad4; flex: none; }
.panel input[type="radio"]:checked { border: 3px solid #d5dae1; background: #b5b0b2; }
.who { padding-left: 85px; font-size: 16px; color: #222b36; }
.line { display: flex; align-items: center; height: 25px; white-space: nowrap; }
.line label { display: flex; align-items: center; gap: 5px; }
.name-line { align-items: flex-start; margin-bottom: 34px; }
.last { width: 173px; }
.comma { width: 21px; text-align: center; color: #000; line-height: 26px; }
.first { width: 133px; }
.title { width: 100px; margin-left: 1px; }
.mail-line { gap: 5px; height: 30px; align-items: flex-start; }
.mail { width: 354px; }
.radio-line { gap: 11px; padding-left: 142px; height: 23px; }
.send-line { gap: 10px; height: 20px; }
.template { width: 152px; margin-right: 3px; }
.opted { padding-left: 145px; height: 36px; }
.open-line { padding-left: 144px; height: 22px; }
.open-line label { gap: 11px; }
.code { width: 185px; }
.notice { padding: 9px 0 0 138px; font-weight: bold; color: #8b0000; }
.row { display: flex; height: 25px; font-size: 16px; line-height: 20px; }
.row:nth-child(-n+2) { height: 24px; }
.row > label:first-child, .row .name { width: 112px; font-weight: bold; }
.row input[type="text"], .row select { width: 146px; }
.row .wide { width: 174px; }
.row svg { margin: 2px 0 0 5px; }
.texting { height: 29px; padding-top: 4px; }
.texting label { display: flex; align-items: center; gap: 10px; padding: 2px 0 0 7px; color: #222b36; }
.texting .yes { font-weight: bold; color: #8b0000; width: 65px; }

/* Finder row */
.finder { display: flex; margin-top: 17px; padding-left: 207px; gap: 3px; height: 36px; flex: none; }
.finder .basic { width: 102px; }
.find-name { display: flex; gap: 3px; width: 103px; padding-left: 3px; font-size: 16px; line-height: 22px; white-space: nowrap; }
.find-name svg { width: 17px; height: 18px; margin-top: 2px; }
.find-box { margin-top: -9px; width: 320px; display: flex; flex-direction: column; }
.find-box label { font-style: italic; line-height: 17px; white-space: nowrap; }
.find-box input { height: 25px; padding: 0 4px; border: 2px solid #333; background: #fffacd; font-size: 16px; }
.find-box input::placeholder { color: #b5b096; }

/* Record grid */
.grid { display: flex; flex: 1; min-height: 0; margin-top: 11px; padding: 1px 0 2px 1px; border: 1px solid #888; background: #fff; }
.grid-view { flex: 1; min-width: 0; overflow: hidden; }
table { width: 100%; table-layout: fixed; border-collapse: collapse; }
.grid th { height: 25px; font-weight: normal; text-align: left; padding: 0 5px 2px; border-right: 1px solid #e4e6e8; background: linear-gradient(#fff, #fbfcfc 40%, #eceef0); }
.grid .num, .grid td:nth-child(4) { text-align: right; padding-right: 3px; }
.grid td { height: 25px; padding: 0 0 0 5px; border-right: 1px solid #d9d9d9; overflow: hidden; text-overflow: ellipsis; white-space: nowrap; line-height: 24px; }
.grid td:nth-child(2) { text-align: right; padding-right: 3px; }
.grid td:first-child { padding: 0 0 0 11px; text-overflow: clip; }
.grid td:last-child, .grid th:last-child { border-right: 0; }
.grid tbody tr:nth-child(even) { background: #e1e1e1; }
.grid .picked { background: #888; color: #fff; }
.c-tag { width: 47px; }
.c-id { width: 72px; }
.c-name { width: 160px; }
.c-bal { width: 91px; }
.c-tel { width: 160px; }
.c-mail { width: 198px; }

/* Scroll bars */
.bar { display: flex; align-items: center; background: #fcfcfc; }
.bar b { background: #8b8b8b; border-radius: 5px; }
.bar i { border: 5px solid transparent; }
.bar .up { border-width: 0 5px 7px; border-bottom-color: #888; }
.bar .down { border-width: 7px 5px 0; border-top-color: #888; margin-top: auto; }
.bar .left { border-width: 5px 7px 5px 0; border-right-color: #888; }
.bar .right { border-width: 5px 0 5px 7px; border-left-color: #888; margin-left: auto; }
.grid-bar, .window-bar { flex-direction: column; width: 17px; padding: 5px 0 4px; gap: 7px; }
.grid-bar b { width: 9px; height: 131px; }
.window-bar { position: fixed; top: 0; right: 0; bottom: 0; width: 15px; }
.window-bar b { width: 9px; height: 94%; }
.card-bar { gap: 6px; padding: 0 5px; height: 17px; }
.card-bar b { width: 332px; height: 9px; }

/* Actions menu */
.dropdown { position: absolute; top: 45px; left: 29px; width: 225px; padding-bottom: 1px; border: 1px solid #000; border-top: 0; background: #333; color: #fff; font-weight: bold; }
.group { border-bottom: 1px solid #eee; }
.group:nth-child(2n+1):nth-child(-n+3) { border-bottom-width: 2px; }
.group:last-child { border-bottom: 0; }
.group a, .group label { display: flex; align-items: center; gap: 7px; height: 27px; padding: 0 8px 0 9px; white-space: nowrap; }
.group > :nth-child(even) { height: 28px; }
.group:last-child > :nth-child(-n+2) { height: 28px; }
.group .sub { gap: 11px; }
.sub span { margin-left: auto; }
.group .off { color: #aaa; }

/* Alert tab hanging from the header */
.alert-tab {
  position: absolute; top: 65px; right: 0; width: 26px; height: 93px;
  display: flex; justify-content: center; padding: 27px 0 0;
  border: 1px solid #000; border-radius: 0 0 13px 13px; background: #fff;
  box-shadow: 0 0 40px rgba(0, 0, 0, .8);
  clip-path: inset(0 0 -60px -60px);
}

/* Floating account card */
.card {
  position: absolute; top: 160px; left: 963px; width: 477px; height: 286px;
  padding: 19px 8px 0 6px;
  display: flex; flex-direction: column;
  border: 2px solid #30363d; border-radius: 12px; background: #95a3b7;
  box-shadow: 0 0 30px rgba(0, 0, 0, .7);
  color: #fff; font-size: 15px;
}
.card-head { display: flex; gap: 5px; height: 31px; font-weight: bold; }
.card-head strong { margin-left: auto; }
.card-grid { display: flex; flex-direction: column; justify-content: space-between; height: 187px; padding: 1px; border: 1px solid #6f7b8c; background: #fff; flex: none; }
.card th { height: 25px; padding: 0 5px 2px; font-weight: normal; font-size: 14px; text-align: left; color: #444; border-right: 1px solid #dcdfe2; background: linear-gradient(#fff, #eceef0); overflow: hidden; text-overflow: ellipsis; white-space: nowrap; }
.card th.dark { color: #000; }
.card th.mid { text-align: center; padding: 0 2px 2px; }
.k-student { width: 85px; }
.k-grd { width: 47px; }
.k-enr { width: 73px; }
.k-age { width: 35px; }
.k-tch { width: 104px; }
.k-lunch { width: 66px; }
.card-foot { display: flex; gap: 5px; padding-top: 1px; }
.card-foot strong { line-height: 34px; width: 65px; white-space: nowrap; }
.card button { width: 26px; padding: 0; justify-content: center; }
.card-foot label { margin-left: auto; display: flex; align-items: center; gap: 10px; padding-top: 5px; height: 36px; }
.card-foot input[type="checkbox"] { width: 15px; height: 15px; border: 1px solid #767676; border-radius: 3px; margin-bottom: 6px; }

/* Chat prompt */
.help-chat { position: fixed; right: 27px; bottom: 9px; display: flex; align-items: center; gap: 24px; }
.bubble { position: relative; width: 250px; height: 75px; padding: 13px 19px; border-radius: 10px; background: #fff; color: #111; font-size: 18px; line-height: 24px; white-space: nowrap; box-shadow: 0 0 24px rgba(0, 0, 0, .4); }
.bubble::after { content: ""; position: absolute; right: -9px; top: 28px; border: 9px solid transparent; border-width: 9px 0 9px 9px; border-left-color: #fff; }
.bubble .soft { font-size: 16px; line-height: 26px; color: #666; }
.help-chat button { display: flex; align-items: center; justify-content: center; width: 70px; height: 70px; border: 0; border-radius: 50%; background: #0066d0; }
.help-chat button svg { width: 28px; height: 28px; }
```
